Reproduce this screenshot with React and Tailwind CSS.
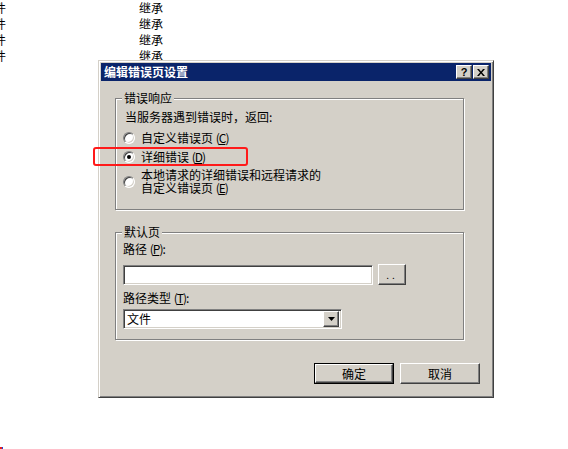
import React from 'react';

const font = { fontFamily: '"Noto Sans CJK SC", "Noto Sans", sans-serif' };

// classic raised / sunken edges
const raised = 'border border-t-white border-l-white border-r-[#404040] border-b-[#404040] shadow-[inset_-1px_-1px_0_#808080,inset_1px_1px_0_#d4d0c8]';
const sunken = 'border border-t-[#808080] border-l-[#808080] border-r-white border-b-white shadow-[inset_1px_1px_0_#404040,inset_-1px_-1px_0_#d4d0c8]';

const Key = ({ k }) => (
  <span className="tracking-[-1px]">
    (<span className="underline">{k}</span>)
  </span>
);

const Radio = ({ checked }) => (
  <span className="relative w-[12px] h-[12px] shrink-0 rounded-full bg-white border border-t-[#808080] border-l-[#808080] border-r-white border-b-white shadow-[inset_1px_1px_0_#404040,inset_-1px_-1px_0_#d4d0c8] flex items-center justify-center">
    {checked && <span className="w-[4px] h-[4px] rounded-full bg-black"></span>}
  </span>
);

const GroupBox = ({ title, className, children }) => (
  <div className={`relative border border-[#808080] shadow-[inset_1px_1px_0_#fff,1px_1px_0_#fff] ${className}`}>
    <span className="absolute left-[6px] top-[-8px] px-[2px] bg-[#d4d0c8] text-[12px] leading-[14px] text-black">
      {title}
    </span>
    {children}
  </div>
);

export default function App() {
  const rows = [0, 1, 2, 3];

  return (
    <div className="relative w-[568px] h-[449px] bg-white overflow-hidden text-black" style={font}>
      {/* list behind the dialog */}
      <div className="flex flex-col">
        {rows.map((r) => (
          <div key={r} className="flex h-[16px] items-center text-[12px] leading-[14px]">
            <span className="ml-[-6px] w-[145px]">件</span>
            <span>继承</span>
          </div>
        ))}
      </div>

      {/* dialog window */}
      <div className="absolute left-[98px] top-[60px] w-[396px] h-[338px] bg-[#d4d0c8] border border-t-[#d4d0c8] border-l-[#d4d0c8] border-r-[#404040] border-b-[#404040] shadow-[inset_1px_1px_0_#fff,inset_-1px_-1px_0_#808080] p-[2px] flex flex-col">
        {/* title bar */}
        <div className="h-[18px] bg-[#0a246a] flex items-center pl-[3px] pr-[2px]">
          <span className="text-white font-bold text-[12px] leading-[14px]">编辑错误页设置</span>
          <div className="ml-auto flex">
            <button className={`w-[16px] h-[14px] bg-[#d4d0c8] ${raised} flex items-center justify-center text-[11px] font-bold leading-none`} style={{ fontFamily: '"Liberation Sans", sans-serif' }}>
              ?
            </button>
            <button className={`ml-[1px] w-[16px] h-[14px] bg-[#d4d0c8] ${raised} flex items-center justify-center`}>
              <svg width="8" height="7" viewBox="0 0 8 7">
                <path d="M0 0h2l2 2.5L6 0h2L5 3.5 8 7H6L4 4.5 2 7H0l3-3.5z" fill="#000" />
              </svg>
            </button>
          </div>
        </div>

        {/* body */}
        <div className="flex flex-col pl-[14px] text-[12px] leading-[14px]">
          <GroupBox title="错误响应" className="mt-[17px] w-[349px] h-[112px] pt-[11px]">
            <div className="pl-[9px]">当服务器遇到错误时，返回:</div>
            <div className="mt-[7px] pl-[7px] flex items-center gap-[6px]">
              <Radio />
              <span>自定义错误页 <Key k="C" /></span>
            </div>
            <div className="mt-[5px] pl-[7px] flex items-center gap-[6px]">
              <Radio checked />
              <span>详细错误 <Key k="D" /></span>
            </div>
            <div className="mt-[4px] pl-[7px] flex items-center gap-[6px]">
              <Radio />
              <span className="flex flex-col">
                <span className="leading-[13px]">本地请求的详细错误和远程请求的</span>
                <span className="leading-[14px]">自定义错误页 <Key k="E" /></span>
              </span>
            </div>
          </GroupBox>

          <GroupBox title="默认页" className="mt-[22px] w-[349px] h-[108px] pt-[9px] pl-[7px]">
            <div>路径 <Key k="P" />:</div>
            <div className="mt-[8px] flex items-center">
              <div className={`w-[250px] h-[20px] bg-white ${sunken}`}></div>
              <button className={`ml-[5px] w-[28px] h-[21px] bg-[#d4d0c8] ${raised} flex items-center justify-center text-[10px] tracking-[3px]`}>
                ..
              </button>
            </div>
            <div className="mt-[6px]">路径类型 <Key k="T" />:</div>
            <div className={`mt-[4px] w-[219px] h-[20px] bg-white ${sunken} flex items-center p-[2px]`}>
              <span className="pl-[1px] flex-1">文件</span>
              <span className={`w-[16px] h-[16px] bg-[#d4d0c8] ${raised} flex items-center justify-center`}>
                <svg width="7" height="4" viewBox="0 0 7 4">
                  <path d="M0 0h7L3.5 4z" fill="#000" />
                </svg>
              </span>
            </div>
          </GroupBox>

          <div className="mt-[23px] flex justify-end gap-[6px] pr-[11px]">
            <div className="w-[80px] h-[21px] border border-black">
              <button className={`w-full h-full bg-[#d4d0c8] ${raised} flex items-center justify-center`}>确定</button>
            </div>
            <button className={`w-[80px] h-[21px] bg-[#d4d0c8] ${raised} flex items-center justify-center`}>取消</button>
          </div>
        </div>
      </div>

      {/* red highlight */}
      <div className="absolute left-[93px] top-[147px] w-[155px] h-[19px] border-2 border-[#ff1a1a] rounded-[3px]"></div>

      {/* stray pixels */}
      <span className="absolute left-0 top-[447px] w-[2px] h-[2px] bg-[#e02020]"></span>
      <span className="absolute left-[2px] top-[447px] w-[1px] h-[2px] bg-[#2040e0]"></span>
    </div>
  );
}
